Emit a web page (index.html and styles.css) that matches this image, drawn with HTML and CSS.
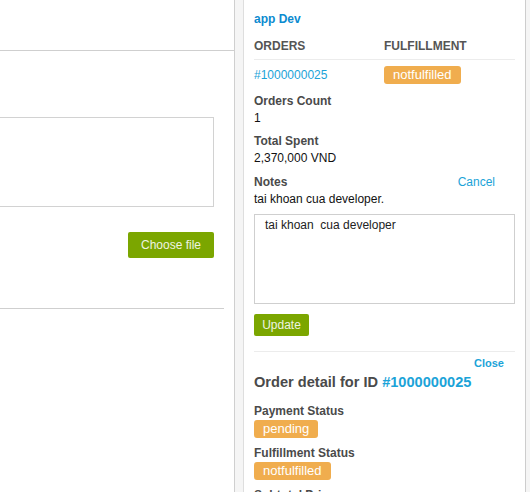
FILE: index.html
```html
<!DOCTYPE html>
<html>
<head>
<meta charset="utf-8">
<link rel="stylesheet" href="styles.css">
</head>
<body>
<div class="layout">
  <main class="main">
    <div class="main-top"></div>
    <div class="main-body">
      <div class="drop-box"></div>
      <div class="file-row"><button class="btn btn-green btn-file">Choose file</button></div>
      <div class="main-rule"></div>
    </div>
  </main>
  <div class="gutter"></div>
  <aside class="panel">
    <div class="app-name">app Dev</div>
    <div class="orders-head">
      <span class="col-a">ORDERS</span>
      <span class="col-b">FULFILLMENT</span>
    </div>
    <div class="orders-row">
      <a class="col-a link">#1000000025</a>
      <span class="col-b"><span class="badge">notfulfilled</span></span>
    </div>
    <div class="field first">
      <div class="label">Orders Count</div>
      <div class="value">1</div>
    </div>
    <div class="field">
      <div class="label">Total Spent</div>
      <div class="value">2,370,000 VND</div>
    </div>
    <div class="field notes">
      <div class="notes-head">
        <span class="label">Notes</span>
        <a class="cancel link">Cancel</a>
      </div>
      <div class="value">tai khoan cua developer.</div>
    </div>
    <textarea class="notes-input">tai khoan  cua developer</textarea>
    <button class="btn btn-green btn-update">Update</button>
    <div class="panel-rule"></div>
    <div class="close-row"><a class="close link">Close</a></div>
    <h2 class="detail-title">Order detail for ID <span class="title-id">#1000000025</span></h2>
    <div class="status status-first">
      <div class="label">Payment Status</div>
      <span class="badge">pending</span>
    </div>
    <div class="status">
      <div class="label">Fulfillment Status</div>
      <span class="badge">notfulfilled</span>
    </div>
    <div class="status">
      <div class="label">Subtotal Price</div>
    </div>
  </aside>
  <div class="rest"></div>
</div>
</body>
</html>
```

FILE: styles.css
```css
html, body {
  margin: 0;
  padding: 0;
  height: 100%;
  overflow: hidden;
}
body {
  font-family: "Liberation Sans", Arial, sans-serif;
  font-size: 12px;
  color: #222;
  background: #fff;
}
.layout {
  display: flex;
  height: 492px;
}
.main {
  width: 234px;
  flex: none;
  border-right: 1px solid #cfcfcf;
  background: #fff;
  overflow: hidden;
}
.main-top {
  height: 50px;
  border-bottom: 1px solid #cfcfcf;
}
.main-body {
  padding-top: 66px;
}
.drop-box {
  margin-left: -30px;
  width: 242px;
  height: 88px;
  border: 1px solid #d2d2d2;
}
.file-row {
  display: flex;
  justify-content: flex-end;
  padding-right: 20px;
  margin-top: 25px;
}
.btn {
  font-family: "Liberation Sans", Arial, sans-serif;
  border: none;
  border-radius: 2px;
  cursor: pointer;
}
.btn-green {
  background: #7ba600;
  color: #eef4e2;
}
.btn-file {
  width: 86px;
  height: 26px;
  font-size: 12px;
  padding: 0;
}
.main-rule {
  margin-top: 50px;
  width: 224px;
  border-top: 1px solid #cfcfcf;
}
.gutter {
  width: 8px;
  flex: none;
  background: #f5f5f5;
}
.panel {
  width: 261px;
  flex: none;
  background: #fff;
  border-left: 1px solid #dedede;
  border-right: 1px solid #cdcdcd;
  padding: 11px 10px 0;
  overflow: hidden;
}
.rest {
  flex: 1;
  background: #f5f5f5;
}
.app-name {
  font-weight: bold;
  color: #0c8bd0;
  line-height: 17px;
}
.orders-head {
  display: flex;
  margin-top: 10px;
  padding-bottom: 4px;
  border-bottom: 1px solid #ececec;
  line-height: 17px;
  font-weight: bold;
  color: #555;
}
.col-a {
  width: 130px;
  flex: none;
}
.orders-row {
  display: flex;
  align-items: center;
  padding-top: 6px;
  height: 18px;
  line-height: 18px;
}
.link {
  color: #1ba3d8;
  text-decoration: none;
  cursor: pointer;
}
.badge {
  display: inline-block;
  background: #f0ad4e;
  color: #fff;
  font-size: 13px;
  line-height: 18px;
  height: 18px;
  padding: 0 9px;
  border-radius: 3px;
}
.field {
  margin-top: 6px;
  line-height: 17px;
}
.field.first {
  margin-top: 9px;
}
.field.notes {
  margin-top: 7px;
}
.label {
  font-weight: bold;
  color: #4a4a4a;
  line-height: 17px;
}
.value {
  color: #111;
}
.notes-head {
  display: flex;
  justify-content: space-between;
  padding-right: 20px;
}
.cancel {
  font-size: 12px;
}
.notes-input {
  display: block;
  box-sizing: border-box;
  width: 261px;
  height: 90px;
  margin: 6px 0 0;
  padding: 3px 10px;
  border: 1px solid #cfcfcf;
  font-family: "Liberation Sans", Arial, sans-serif;
  font-size: 12px;
  line-height: 15px;
  color: #222;
  resize: none;
  border-radius: 0;
}
.btn-update {
  display: block;
  margin-top: 10px;
  width: 55px;
  height: 22px;
  font-size: 12px;
  padding: 0;
}
.panel-rule {
  margin-top: 15px;
  border-top: 1px solid #ececec;
}
.close-row {
  display: flex;
  justify-content: flex-end;
  padding-right: 11px;
  padding-top: 4px;
  line-height: 14px;
}
.close {
  font-size: 11px;
  font-weight: bold;
}
.detail-title {
  margin: 2px 0 0;
  font-size: 14.6px;
  line-height: 20px;
  font-weight: bold;
  color: #4a4a4a;
}
.title-id {
  color: #1ba3d8;
}
.status {
  margin-top: 7px;
}
.status-first {
  margin-top: 11px;
}
```
